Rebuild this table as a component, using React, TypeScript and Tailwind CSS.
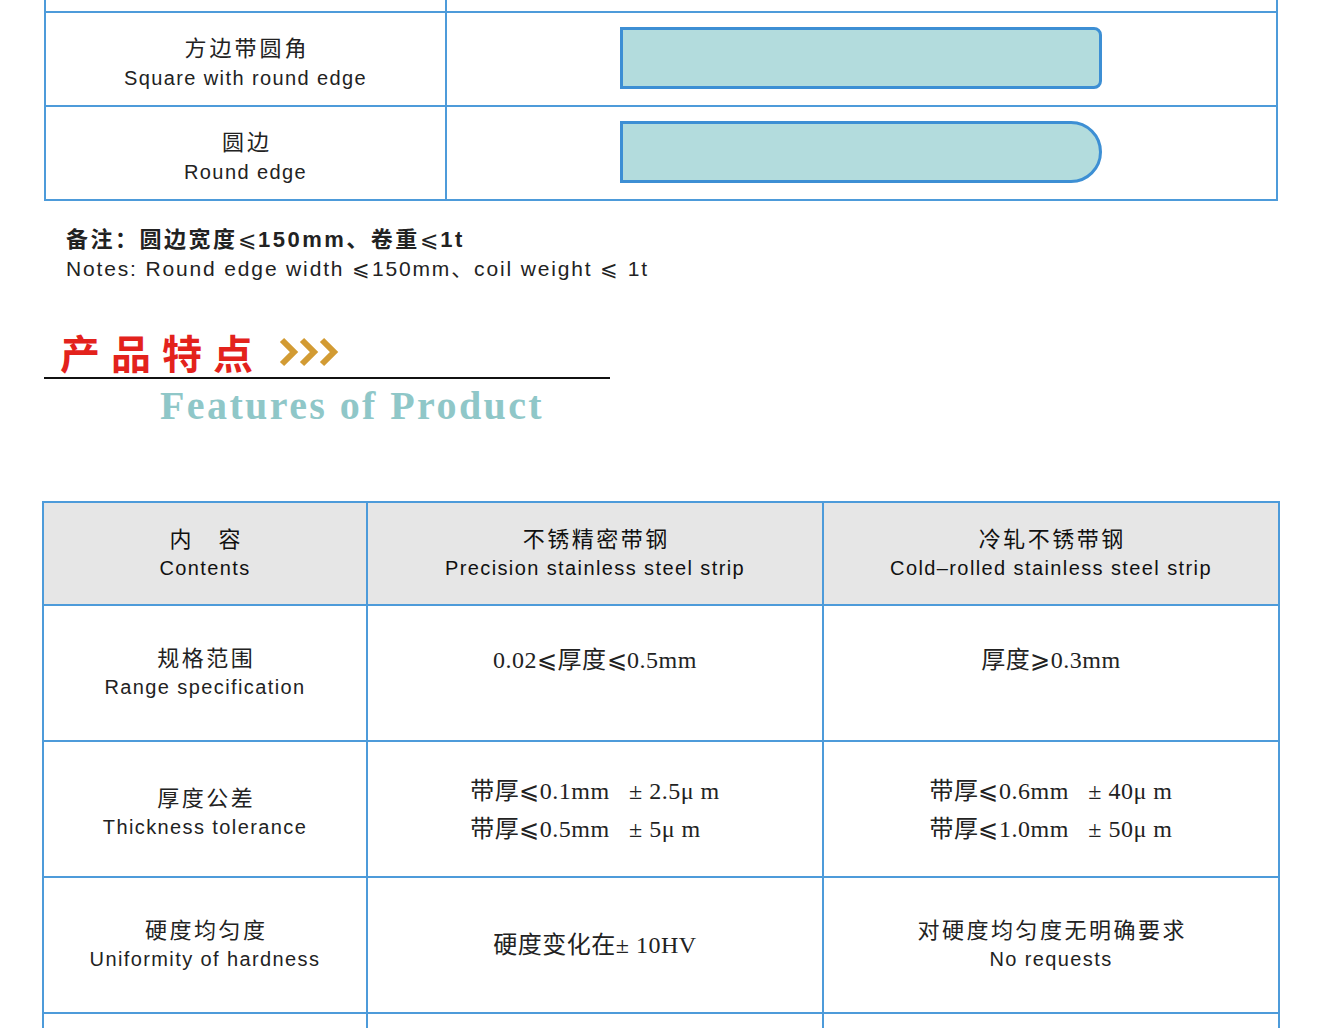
import { Fragment } from "react"

const sans = "font-['Liberation_Sans','Noto_Sans_CJK_SC',sans-serif]"
const serif = "font-['Liberation_Serif','Noto_Sans_CJK_SC',serif]"

// ≤ ≥ 用中文字体的全角字形
function withSym(s: string) {
  return s.split(/([≤≥])/).map((part, i) =>
    part === "≤" || part === "≥" ? (
      <span key={i} className="font-['Noto_Sans_CJK_SC',sans-serif] font-normal">{part === "≤" ? "⩽" : "⩾"}</span>
    ) : (
      <Fragment key={i}>{part}</Fragment>
    )
  )
}

function EdgeRow({ zh, en, shape }: { zh: string; en: string; shape: string }) {
  return (
    <div className="flex h-[94px] border-b-2 border-[#4d9bda]">
      <div className={`w-[401px] border-r-2 border-[#4d9bda] flex flex-col items-center justify-center pt-[8px] text-[#222] ${sans}`}>
        <div className="text-[22px] leading-[30px] tracking-[3px] pl-[3px]">{zh}</div>
        <div className="text-[20px] leading-[28px] tracking-[1.4px]">{en}</div>
      </div>
      <div className="flex-1 flex items-center pl-[173px] pb-[2px]">
        <div className={`w-[482px] h-[62px] bg-[#b3dcdd] border-[3px] border-[#3d8fd4] ${shape}`} />
      </div>
    </div>
  )
}

function Chevrons() {
  return (
    <svg width="60" height="30" viewBox="0 0 60 30" className="ml-[15px]">
      {[0, 20, 40].map((x) => (
        <polyline key={x} points={`${x + 3},3 ${x + 15},15 ${x + 3},27`} fill="none" stroke="#d29b33" strokeWidth="6" />
      ))}
    </svg>
  )
}

type Cell = { lines: string[]; font: "sans" | "serif"; top?: boolean }

const rows: { label: [string, string]; shift?: boolean; cells: Cell[] }[] = [
  {
    label: ["规格范围", "Range specification"],
    cells: [
      { lines: ["0.02≤厚度≤0.5mm"], font: "serif", top: true },
      { lines: ["厚度≥0.3mm"], font: "serif", top: true },
    ],
  },
  {
    label: ["厚度公差", "Thickness tolerance"],
    shift: true,
    cells: [
      { lines: ["带厚≤0.1mm   ± 2.5μ m", "带厚≤0.5mm   ± 5μ m"], font: "serif" },
      { lines: ["带厚≤0.6mm   ± 40μ m", "带厚≤1.0mm   ± 50μ m"], font: "serif" },
    ],
  },
  {
    label: ["硬度均匀度", "Uniformity of hardness"],
    cells: [
      { lines: ["硬度变化在± 10HV"], font: "serif" },
      { lines: ["对硬度均匀度无明确要求", "No requests"], font: "sans" },
    ],
  },
]

function LabelCell({ zh, en, header, shift }: { zh: string; en: string; header?: boolean; shift?: boolean }) {
  return (
    <div className={`flex flex-col items-center justify-center ${sans} ${header ? "text-[#111]" : "text-[#222]"} ${shift ? "pt-[8px]" : ""}`}>
      <div className="text-[22px] leading-[29px] tracking-[2.5px] pl-[2.5px] whitespace-pre">{zh}</div>
      <div className="text-[20px] leading-[29px] tracking-[1.4px]">{en}</div>
    </div>
  )
}

function ValueCell({ cell }: { cell: Cell }) {
  if (cell.font === "sans") {
    const [zh, en] = cell.lines
    return <LabelCell zh={zh} en={en} />
  }
  return (
    <div className={`flex flex-col items-start justify-center text-[#222] ${serif} ${cell.top ? "pb-[28px]" : ""}`}>
      {cell.lines.map((l) => (
        <div key={l} className="text-[24px] leading-[36px] whitespace-pre tracking-[0.5px]">{withSym(l)}</div>
      ))}
    </div>
  )
}

export default function App() {
  return (
    <div className="w-[1321px] h-[1028px] overflow-hidden bg-white">
      {/* 边部形状表 */}
      <div className="ml-[44px] w-[1234px] border-x-2 border-[#4d9bda]">
        <div className="flex h-[13px] border-b-2 border-[#4d9bda]">
          <div className="w-[401px] border-r-2 border-[#4d9bda]" />
        </div>
        <EdgeRow zh="方边带圆角" en="Square with round edge" shape="rounded-r-[8px]" />
        <EdgeRow zh="圆边" en="Round edge" shape="rounded-r-[31px]" />
      </div>

      {/* 备注 */}
      <div className={`pl-[66px] pt-[22px] text-[#222] ${sans}`}>
        <div className="text-[22px] leading-[29px] font-bold tracking-[2.5px]">{withSym("备注：圆边宽度≤150mm、卷重≤1t")}</div>
        <div className="text-[21px] leading-[27px] tracking-[1.85px]">{withSym("Notes: Round edge width ≤150mm、coil weight ≤ 1t")}</div>
      </div>

      {/* 产品特点 */}
      <div className="mt-[45px] ml-[44px] w-[566px]">
        <div className="flex items-center pl-[16px] h-[50px]">
          <span className="text-[40px] leading-[50px] font-bold text-[#e3221c] tracking-[11px] font-['Noto_Sans_CJK_SC',serif]">产品特点</span>
          <Chevrons />
        </div>
        <div className="h-[2px] bg-[#111]" />
      </div>
      <div className={`pl-[160px] text-[40px] leading-[54px] font-bold text-[#8fc7c8] tracking-[2.4px] ${serif}`}>
        Features of Product
      </div>

      {/* 参数表 */}
      <div className="mt-[68px] ml-[42px] w-[1238px] border-x-2 border-t-2 border-[#4d9bda]">
        <div className="grid grid-cols-[324px_456px_1fr] h-[103px] bg-[#e6e6e6] border-b-2 border-[#4d9bda]">
          <div className="border-r-2 border-[#4d9bda] flex justify-center">
            <LabelCell zh={"内　容"} en="Contents" header />
          </div>
          <div className="border-r-2 border-[#4d9bda] flex justify-center">
            <LabelCell zh="不锈精密带钢" en="Precision stainless steel strip" header />
          </div>
          <div className="flex justify-center">
            <LabelCell zh="冷轧不锈带钢" en="Cold–rolled stainless steel strip" header />
          </div>
        </div>
        {rows.map((r) => (
          <div key={r.label[0]} className="grid grid-cols-[324px_456px_1fr] h-[136px] border-b-2 border-[#4d9bda]">
            <div className="border-r-2 border-[#4d9bda] flex justify-center">
              <LabelCell zh={r.label[0]} en={r.label[1]} shift={r.shift} />
            </div>
            <div className="border-r-2 border-[#4d9bda] flex justify-center">
              <ValueCell cell={r.cells[0]} />
            </div>
            <div className="flex justify-center">
              <ValueCell cell={r.cells[1]} />
            </div>
          </div>
        ))}
        <div className="grid grid-cols-[324px_456px_1fr] h-[40px]">
          <div className="border-r-2 border-[#4d9bda]" />
          <div className="border-r-2 border-[#4d9bda]" />
          <div />
        </div>
      </div>
    </div>
  )
}
